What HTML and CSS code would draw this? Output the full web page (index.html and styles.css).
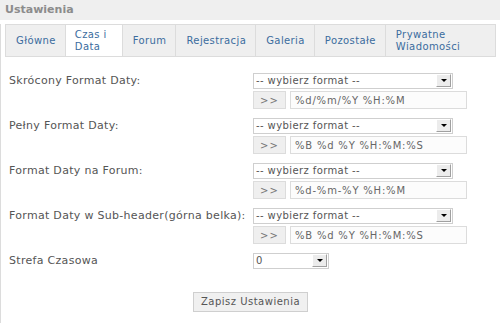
FILE: index.html
```html
<!DOCTYPE html>
<html>
<head>
    <title>Ustawienia</title>
    <link rel="stylesheet" href="styles.css">
</head>
<body>
    <div class="header">Ustawienia</div>
    <div class="panel">
        <ul class="tabs">
            <li>Główne</li>
            <li class="active">Czas i<br>Data</li>
            <li>Forum</li>
            <li>Rejestracja</li>
            <li>Galeria</li>
            <li>Pozostałe</li>
            <li class="last">Prywatne<br>Wiadomości</li>
        </ul>

        <form class="settings">
            <label>Skrócony Format Daty:</label>
            <div class="control">
                <div class="select"><span>-- wybierz format --</span><i class="arrow"></i></div>
                <div class="pair">
                    <button type="button" class="small">&gt;&gt;</button>
                    <input type="text" value="%d/%m/%Y %H:%M">
                </div>
            </div>

            <label>Pełny Format Daty:</label>
            <div class="control">
                <div class="select"><span>-- wybierz format --</span><i class="arrow"></i></div>
                <div class="pair">
                    <button type="button" class="small">&gt;&gt;</button>
                    <input type="text" value="%B %d %Y %H:%M:%S">
                </div>
            </div>

            <label>Format Daty na Forum:</label>
            <div class="control">
                <div class="select"><span>-- wybierz format --</span><i class="arrow"></i></div>
                <div class="pair">
                    <button type="button" class="small">&gt;&gt;</button>
                    <input type="text" value="%d-%m-%Y %H:%M">
                </div>
            </div>

            <label>Format Daty w Sub-header(górna belka):</label>
            <div class="control">
                <div class="select"><span>-- wybierz format --</span><i class="arrow"></i></div>
                <div class="pair">
                    <button type="button" class="small">&gt;&gt;</button>
                    <input type="text" value="%B %d %Y %H:%M:%S">
                </div>
            </div>

            <label>Strefa Czasowa</label>
            <div class="control">
                <div class="select narrow"><span>0</span><i class="arrow"></i></div>
            </div>

            <div class="submit">
                <button type="button" class="save">Zapisz Ustawienia</button>
            </div>
        </form>
    </div>
</body>
</html>
```

FILE: styles.css
```css
body {
    margin: 0;
    width: 500px;
    font-family: "DejaVu Sans", Verdana, sans-serif;
    background: #fff;
}
.header {
    height: 20px;
    line-height: 19px;
    padding-left: 5px;
    background: #efefef;
    color: #8c8c8c;
    font-size: 11px;
    font-weight: bold;
}
.panel {
    border-left: 1px solid #dcdcdc;
    border-bottom: 1px solid #dcdcdc;
    height: 300px;
    box-sizing: border-box;
}
.tabs {
    list-style: none;
    margin: 4px 4px 0 4px;
    padding: 0;
    height: 33px;
    display: flex;
    background: #efefef;
    border: 1px solid #dcdcdc;
    box-sizing: border-box;
}
.tabs li {
    display: flex;
    align-items: center;
    padding: 0 9px 0 10px;
    border-right: 1px solid #dcdcdc;
    font-size: 10px;
    line-height: 12px;
    letter-spacing: 0.4px;
    color: #3b6c9e;
}
.tabs li.active {
    background: #fff;
    padding: 0 15px 0 9px;
}
.tabs li.last {
    border-right: none;
}
.settings {
    display: grid;
    grid-template-columns: 244px 1fr;
    row-gap: 9px;
    padding: 16px 0 0 8px;
}
.settings label {
    font-size: 11px;
    line-height: 16px;
    letter-spacing: 0.3px;
    color: #555;
}
.control {
    display: flex;
    flex-direction: column;
    gap: 2px;
}
.select {
    position: relative;
    width: 200px;
    height: 16px;
    box-sizing: border-box;
    border: 1px solid #cfcfcf;
    background: #fff;
    font-size: 10px;
    line-height: 14px;
    letter-spacing: 0.4px;
    color: #555;
    padding-left: 2px;
}
.select.narrow {
    width: 76px;
}
.arrow {
    position: absolute;
    right: 1px;
    top: 0;
    width: 15px;
    height: 13px;
    background: #ececec;
    border-top: 1px solid #fff;
    border-left: 1px solid #fff;
    border-right: 1px solid #a0a0a0;
    border-bottom: 1px solid #a0a0a0;
    box-sizing: border-box;
}
.arrow::after {
    content: "";
    position: absolute;
    left: 4px;
    top: 4px;
    border-left: 3px solid transparent;
    border-right: 3px solid transparent;
    border-top: 3px solid #000;
}
.pair {
    display: flex;
    gap: 4px;
}
.small {
    width: 33px;
    height: 18px;
    padding: 0;
    background: #efefef;
    border: 1px solid #dcdcdc;
    font-family: "DejaVu Sans", Verdana, sans-serif;
    font-size: 10px;
    letter-spacing: 1px;
    color: #777;
}
.pair input {
    width: 177px;
    height: 18px;
    box-sizing: border-box;
    border: 1px solid #dcdcdc;
    background: #fcfcfc;
    padding: 0 0 0 4px;
    font-family: "DejaVu Sans", Verdana, sans-serif;
    font-size: 10px;
    letter-spacing: 0.8px;
    color: #666;
}
.submit {
    grid-column: 1 / 3;
    text-align: center;
    padding-top: 12px;
    margin-left: -8px;
}
.save {
    width: 115px;
    height: 20px;
    padding: 0;
    background: #f0f0f0;
    border: 1px solid #cfcfcf;
    font-family: "DejaVu Sans", Verdana, sans-serif;
    font-size: 10px;
    letter-spacing: 0.5px;
    color: #555;
}
```
